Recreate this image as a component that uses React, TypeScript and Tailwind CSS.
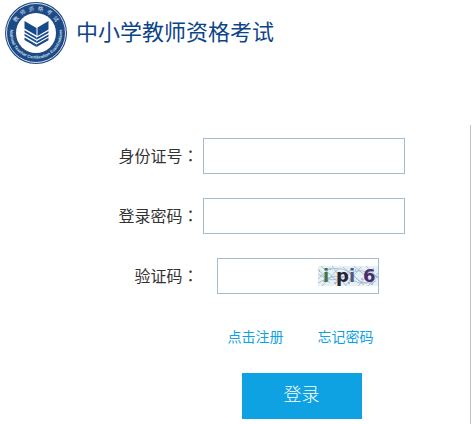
import { FormEvent, ReactNode, useState } from "react";

function Logo() {
  return (
    <svg viewBox="0 0 64 64" className="size-16 shrink-0" role="img" aria-label="教师资格考试">
      <defs>
        <path id="arc-top" d="M9.500 32a22.500 22.500 0 0 1 45 0" />
        <path id="arc-bottom" d="M7.500 23a26 26 0 1 0 49 0" />
      </defs>
      <circle cx="32" cy="32" r="31" fill="#1d4a85" />
      <circle cx="32" cy="32" r="29.5" fill="none" stroke="#e6edf5" strokeWidth="0.9" />
      <circle cx="32" cy="32" r="20" fill="#fff" />
      <g fill="#d3e0ee" className="font-['Liberation_Sans','Noto_Sans_CJK_SC',sans-serif]">
        <text fontSize="5.500" textAnchor="middle">
          <textPath href="#arc-top" startOffset="50%">
            教&#160; 师&#160; 资&#160; 格&#160; 考&#160; 试
          </textPath>
        </text>
        <text fontSize="4.200" fontWeight="700" textAnchor="middle">
          <textPath href="#arc-bottom" startOffset="50%">
            National Teacher Certification Examinations
          </textPath>
        </text>
      </g>
      <g fill="#174a8b">
        <path d="M20.500 20 32.500 27v7.500L20.500 27.500z" />
        <path d="M20.500 29.200l12 7v2l-12-7z" />
        <path d="M20.500 32.800l12 7v2l-12-7z" />
        <path d="M20.500 36.400l12 7v2.600l-12-7z" />
        <path d="M44.500 20l-11 6.500V35l11-6.500z" />
        <path d="M44.500 30l-12 6.800v2l12-6.800z" />
        <path d="M44.500 33.400l-12 6.800v2l12-6.800z" />
        <path d="M44.500 36.800l-12 6.800V46l12-6.800z" />
      </g>
    </svg>
  );
}

function Captcha() {
  return (
    <svg
      viewBox="0 0 60 20"
      className="h-5 w-[60px] shrink-0 font-['DejaVu_Sans',sans-serif]"
      role="img"
      aria-label="验证码图片"
    >
      <rect width="60" height="20" fill="#e4f2f7" />
      <g fill="none" stroke="#a3b3cc" strokeWidth="0.8">
        <path d="M0 3l12 14M3 0l19 18M14 0l14 20M25 1l21 18M36 0l20 17M48 0l12 12" />
        <path d="M0 13l12-11M4 20l16-17M17 18l18-16M28 19l15-18M40 20l16-18M50 20l10-10" />
        <path d="M0 8q14 11 29 1t31 3M0 17q18-12 34-3t26-7M7 4q20-5 29 6t22 5" />
      </g>
      <path
        d="M1 5h1m3 10h2m5-12h1m3 14h2m4-8h1m7 8h2m5-13h1m5 9h2m4-9h1m3 14h2"
        stroke="#8291b1"
      />
      <g fontSize="18" fontWeight="700">
        <text x="5" y="16" fill="#467542">i</text>
        <text x="18" y="16" fill="#282530">p</text>
        <text x="31" y="16" fill="#56567c">i</text>
        <text x="45" y="16" fill="#492c70">6</text>
      </g>
    </svg>
  );
}

function Row({ id, label, children }: { id: string; label: string; children: ReactNode }) {
  return (
    <div className="flex items-center gap-1">
      <label
        htmlFor={id}
        className="w-20 shrink-0 pb-0.5 text-right text-base whitespace-nowrap text-[#333]"
      >
        {label}
        <span className="font-['Noto_Sans_CJK_TC',sans-serif]">：</span>
      </label>
      {children}
    </div>
  );
}

export default function App() {
  const [idNumber, setIdNumber] = useState("");
  const [password, setPassword] = useState("");
  const [code, setCode] = useState("");

  function submit(e: FormEvent) {
    e.preventDefault();
  }

  return (
    <div className="bg-white font-['Noto_Sans_CJK_SC',sans-serif]">
      <header className="flex items-start gap-2 pt-px pl-1">
        <Logo />
        <h1 className="pt-[15px] text-[22px] leading-7 font-normal text-[#0c4488]">
          中小学教师资格考试
        </h1>
      </header>

      <main className="mt-15 mr-px flex justify-center border-r border-[#c4c4c4] pt-[13px] pb-2 pl-[53px]">
        <form onSubmit={submit} className="w-[286px]">
          <div className="space-y-6">
            <Row id="id-number" label="身份证号">
              <input
                id="id-number"
                type="text"
                value={idNumber}
                onChange={(e) => setIdNumber(e.target.value)}
                className="h-9 w-full min-w-0 border border-[#a5bcd0] px-2 text-base outline-none focus:border-[#0fa2e3]"
              />
            </Row>
            <Row id="password" label="登录密码">
              <input
                id="password"
                type="password"
                value={password}
                onChange={(e) => setPassword(e.target.value)}
                className="h-9 w-full min-w-0 border border-[#a5bcd0] px-2 text-base outline-none focus:border-[#0fa2e3]"
              />
            </Row>
            <Row id="code" label="验证码">
              <div className="ml-3.5 flex h-9 w-[162px] items-center border border-[#a5bcd0]">
                <input
                  id="code"
                  type="text"
                  value={code}
                  onChange={(e) => setCode(e.target.value)}
                  className="h-full min-w-0 flex-1 px-2 text-base outline-none"
                />
                <Captcha />
              </div>
            </Row>
          </div>

          <div className="mt-[30px] flex justify-center gap-[34px] pl-[78px] text-sm leading-6 text-[#0fa2e3]">
            <a href="#register">点击注册</a>
            <a href="#forgot">忘记密码</a>
          </div>

          <div className="mt-[25px] flex justify-center pl-20">
            <button
              type="submit"
              className="h-[46px] w-30 bg-[#0fa2e3] pb-1.5 text-lg font-light text-white"
            >
              登录
            </button>
          </div>
        </form>
      </main>
    </div>
  );
}
